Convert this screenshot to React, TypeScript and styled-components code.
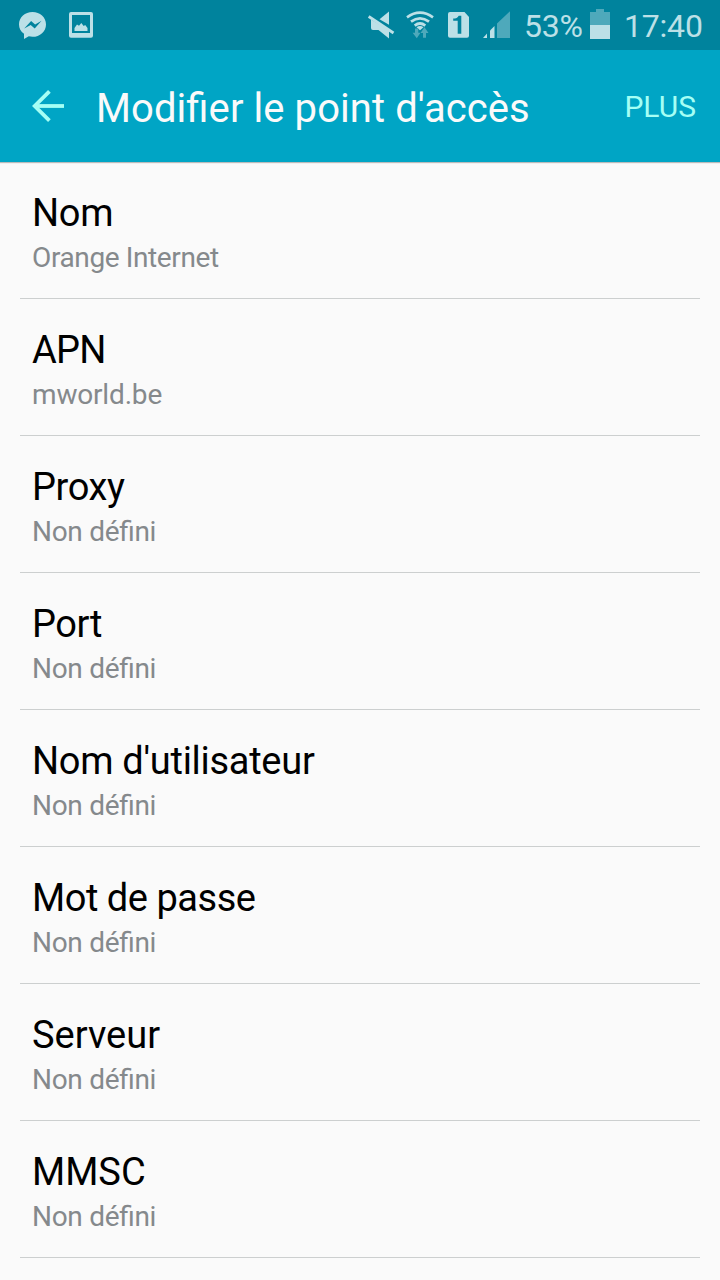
import React from 'react';
import styled, { createGlobalStyle } from 'styled-components';

const GlobalStyle = createGlobalStyle`
  * { box-sizing: border-box; }
  html, body { margin: 0; padding: 0; background: #fafafa; }
  body {
    font-family: Roboto, "Liberation Sans", sans-serif;
    font-feature-settings: "liga" 1;
    overflow: hidden;
  }
`;

const Screen = styled.div`
  display: flex;
  flex-direction: column;
  width: 720px;
  height: 1280px;
  overflow: hidden;
  background: #fafafa;
`;

const StatusBar = styled.header`
  display: flex;
  justify-content: space-between;
  flex: none;
  height: 50px;
  padding: 0 17px 0 19px;
  background: #00839d;
  color: #bce0e7;
`;

const StatusGroup = styled.div`
  display: flex;
  height: 50px;
`;

const StatusIcon = styled.svg<{ $w: number; $gap?: number }>`
  display: block;
  flex: none;
  width: ${(p) => p.$w}px;
  height: 50px;
  margin-right: ${(p) => p.$gap ?? 0}px;
`;

const StatusText = styled.span<{ $w: number; $gap?: number }>`
  flex: none;
  width: ${(p) => p.$w}px;
  margin-right: ${(p) => p.$gap ?? 0}px;
  padding-top: 7px;
  font-size: 32px;
  line-height: 38px;
  letter-spacing: -0.2px;
  white-space: nowrap;
`;

const AppBar = styled.div`
  display: flex;
  align-items: flex-start;
  flex: none;
  height: 112px;
  padding: 0 24px 0 32px;
  background: #00a5c5;
  box-shadow: 0 1px 1px rgba(0, 0, 0, 0.25);
`;

const BackButton = styled.button`
  flex: none;
  width: 32px;
  height: 112px;
  margin-right: 32px;
  padding: 0;
  border: 0;
  background: none;
  svg { display: block; }
`;

const Title = styled.h1`
  flex: 1;
  margin: 35px 0 0;
  font-size: 40px;
  font-weight: 400;
  line-height: 48px;
  letter-spacing: 0.08px;
  color: #fafafa;
  white-space: nowrap;
`;

const MoreButton = styled.button`
  flex: none;
  margin-top: 39px;
  padding: 0;
  border: 0;
  background: none;
  font: 400 30px/36px Roboto, "Liberation Sans", sans-serif;
  color: #a5fff5;
`;

const List = styled.ul`
  margin: 0;
  padding: 0 20px;
  list-style: none;
`;

const Row = styled.li`
  height: 137px;
  padding: 29px 12px 0;
  border-bottom: 1px solid #cccfcf;
`;

const Label = styled.div<{ $tracking: number }>`
  font-size: 38px;
  line-height: 44px;
  letter-spacing: ${(p) => p.$tracking}px;
  color: #000;
`;

const Value = styled.div<{ $tracking: number }>`
  margin-top: 6px;
  font-size: 28px;
  line-height: 34px;
  letter-spacing: ${(p) => p.$tracking}px;
  color: #85898c;
`;

const UNSET = { value: 'Non défini', valueTracking: -0.3 };

const entries = [
  { label: 'Nom', tracking: -0.3, value: 'Orange Internet', valueTracking: -0.38 },
  { label: 'APN', tracking: -0.8, value: 'mworld.be', valueTracking: -0.17 },
  { label: 'Proxy', tracking: -0.4, ...UNSET },
  { label: 'Port', tracking: -0.4, ...UNSET },
  { label: "Nom d'utilisateur", tracking: -0.29, ...UNSET },
  { label: 'Mot de passe', tracking: -0.47, ...UNSET },
  { label: 'Serveur', tracking: 0, ...UNSET },
  { label: 'MMSC', tracking: 0, ...UNSET },
];

const LIGHT = '#bce0e7';
const DIM = '#4ea9bb';
const BAR = '#00839d';

export default function App() {
  return (
    <Screen>
      <GlobalStyle />
      <StatusBar>
        <StatusGroup>
          <StatusIcon $w={27} $gap={23} viewBox="19 0 27 50">
            <path d="M32.5 12C25 12 19 17.3 19 24.4c0 4 1.800 7.200 5 9.400V39l4.800-2.700c1.200.3 2.400.5 3.700.5C40 36.800 46 31.500 46 24.400S40 12 32.500 12z" fill={LIGHT} />
            <path d="M24.200 28.500l6.900-7.500 4 3.500 6.500-3.700-6.900 7.700-4-3.500z" fill={BAR} />
          </StatusIcon>
          <StatusIcon $w={24} viewBox="69 0 24 50">
            <path fillRule="evenodd" d="M71 12h20a2 2 0 0 1 2 2v21.700a2 2 0 0 1-2 2H71a2 2 0 0 1-2-2V14a2 2 0 0 1 2-2zM72 15v18h18V15z" fill={LIGHT} />
            <path d="M74.500 31v-3l2.500-3.500 2 1.200 2.300-2.800 2.400 3 1.500-1 2.300 3V31z" fill={LIGHT} />
          </StatusIcon>
        </StatusGroup>
        <StatusGroup>
          <StatusIcon $w={27} $gap={11} viewBox="368 0 27 50">
            <path d="M379.500 19.200l9.500-7.700v13.200z" fill={LIGHT} />
            <path d="M371 19.500l18 11V38.500L378.500 30H373q-2 0-2-2z" fill={LIGHT} />
            <path d="M368.700 16.500l24.800 16.500" stroke={LIGHT} strokeWidth="2.800" />
          </StatusIcon>
          <StatusIcon $w={28} $gap={14} viewBox="406 0 28 50">
            <g fill="none" stroke={LIGHT} strokeWidth="2.700">
              <path d="M407 17.300q13-9.200 26 0" />
              <path d="M411 21.700q9-6.800 18 0" />
              <path d="M414.700 25.600q5.300-4.200 10.600 0" />
            </g>
            <path d="M416.500 27.200q3.500-2.400 7 0l-3.500 3z" fill={LIGHT} />
            <g fill={DIM}>
              <path d="M415 28.500h3.300v4.300h2.200l-3.700 5.400-4.200-5.400H415z" />
              <path d="M423 37.700h3v-4.800h2.500L424.500 27.300l-4 5.600h2.500z" />
            </g>
          </StatusIcon>
          <StatusIcon $w={21} $gap={14} viewBox="448 0 21 50">
            <path d="M450 12h14.500l4.500 5v18.800a2 2 0 0 1-2 2h-17a2 2 0 0 1-2-2V14a2 2 0 0 1 2-2z" fill={LIGHT} />
            <path d="M458.700 15.700h2.600V33.800h-3.600V20.800h-4.500v-2.300c2.600 0 4.700-.7 5.500-2.800z" fill={BAR} />
          </StatusIcon>
          <StatusIcon $w={28} $gap={13} viewBox="483 0 28 50">
            <path d="M483 38l4-4.500V38z" fill={LIGHT} />
            <path d="M490 38v-7.500l4.500-4.500V38z" fill={LIGHT} />
            <path d="M497 38V23.500L510 11.300V38z" fill={DIM} />
          </StatusIcon>
          <StatusText $w={58} $gap={8}>53%</StatusText>
          <StatusIcon $w={20} $gap={14} viewBox="590 0 20 50">
            <path d="M590 25V12h6V9h8v3h6v13z" fill={DIM} />
            <path d="M590 25h20v14h-20z" fill={LIGHT} />
          </StatusIcon>
          <StatusText $w={79}>17:40</StatusText>
        </StatusGroup>
      </StatusBar>
      <AppBar>
        <BackButton aria-label="Retour">
          <svg width="32" height="112" viewBox="32 50 32 112" fill="none" stroke="#a5fff5" strokeWidth="3.800">
            <path d="M64 106H35" />
            <path d="M49.400 91.300L34.700 106l14.700 14.700" />
          </svg>
        </BackButton>
        <Title>Modifier le point d'accès</Title>
        <MoreButton>PLUS</MoreButton>
      </AppBar>
      <List>
        {entries.map((e) => (
          <Row key={e.label}>
            <Label $tracking={e.tracking}>{e.label}</Label>
            <Value $tracking={e.valueTracking}>{e.value}</Value>
          </Row>
        ))}
      </List>
    </Screen>
  );
}
